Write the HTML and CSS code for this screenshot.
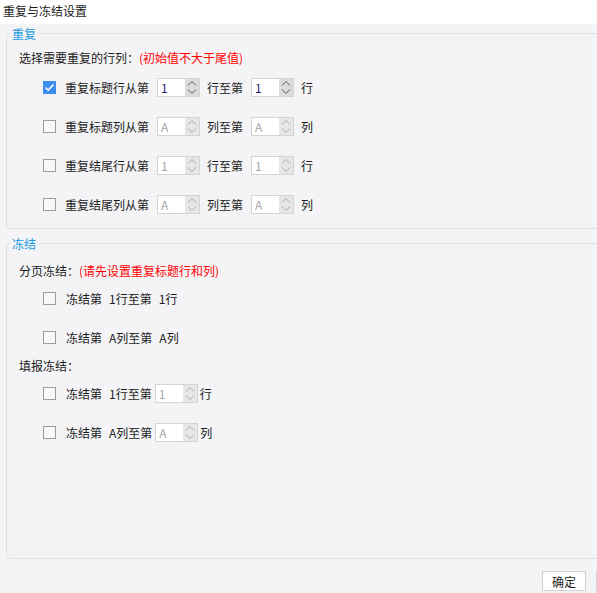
FILE: index.html
```html
<!DOCTYPE html>
<html lang="zh">
<head>
<meta charset="utf-8">
<title>重复与冻结设置</title>
<link rel="stylesheet" href="styles.css">
</head>
<body>
<div class="dialog">
  <div class="titlebar">重复与冻结设置</div>

  <fieldset class="group group-repeat">
    <legend>重复</legend>
    <div class="hint">选择需要重复的行列：<span class="warn">(初始值不大于尾值)</span></div>

    <div class="row">
      <span class="check on"><svg viewBox="0 0 13 13" width="13" height="13"><polyline points="2.5,6.5 5.2,9.2 10.5,3.5" fill="none" stroke="#fff" stroke-width="1.6"/></svg></span>
      <span class="label">重复标题行从第</span>
      <span class="spin"><span class="val">1</span><span class="arrows"><svg viewBox="0 0 14 17" width="14" height="17"><polyline points="3,6.5 7,2.5 11,6.5" fill="none" stroke="currentColor"/><polyline points="3,10.5 7,14.5 11,10.5" fill="none" stroke="currentColor"/></svg></span></span>
      <span class="label">行至第</span>
      <span class="spin"><span class="val">1</span><span class="arrows"><svg viewBox="0 0 14 17" width="14" height="17"><polyline points="3,6.5 7,2.5 11,6.5" fill="none" stroke="currentColor"/><polyline points="3,10.5 7,14.5 11,10.5" fill="none" stroke="currentColor"/></svg></span></span>
      <span class="label">行</span>
    </div>

    <div class="row">
      <span class="check"></span>
      <span class="label">重复标题列从第</span>
      <span class="spin off"><span class="val">A</span><span class="arrows"><svg viewBox="0 0 14 17" width="14" height="17"><polyline points="3,6.5 7,2.5 11,6.5" fill="none" stroke="currentColor"/><polyline points="3,10.5 7,14.5 11,10.5" fill="none" stroke="currentColor"/></svg></span></span>
      <span class="label">列至第</span>
      <span class="spin off"><span class="val">A</span><span class="arrows"><svg viewBox="0 0 14 17" width="14" height="17"><polyline points="3,6.5 7,2.5 11,6.5" fill="none" stroke="currentColor"/><polyline points="3,10.5 7,14.5 11,10.5" fill="none" stroke="currentColor"/></svg></span></span>
      <span class="label">列</span>
    </div>

    <div class="row">
      <span class="check"></span>
      <span class="label">重复结尾行从第</span>
      <span class="spin off"><span class="val">1</span><span class="arrows"><svg viewBox="0 0 14 17" width="14" height="17"><polyline points="3,6.5 7,2.5 11,6.5" fill="none" stroke="currentColor"/><polyline points="3,10.5 7,14.5 11,10.5" fill="none" stroke="currentColor"/></svg></span></span>
      <span class="label">行至第</span>
      <span class="spin off"><span class="val">1</span><span class="arrows"><svg viewBox="0 0 14 17" width="14" height="17"><polyline points="3,6.5 7,2.5 11,6.5" fill="none" stroke="currentColor"/><polyline points="3,10.5 7,14.5 11,10.5" fill="none" stroke="currentColor"/></svg></span></span>
      <span class="label">行</span>
    </div>

    <div class="row">
      <span class="check"></span>
      <span class="label">重复结尾列从第</span>
      <span class="spin off"><span class="val">A</span><span class="arrows"><svg viewBox="0 0 14 17" width="14" height="17"><polyline points="3,6.5 7,2.5 11,6.5" fill="none" stroke="currentColor"/><polyline points="3,10.5 7,14.5 11,10.5" fill="none" stroke="currentColor"/></svg></span></span>
      <span class="label">列至第</span>
      <span class="spin off"><span class="val">A</span><span class="arrows"><svg viewBox="0 0 14 17" width="14" height="17"><polyline points="3,6.5 7,2.5 11,6.5" fill="none" stroke="currentColor"/><polyline points="3,10.5 7,14.5 11,10.5" fill="none" stroke="currentColor"/></svg></span></span>
      <span class="label">列</span>
    </div>
  </fieldset>

  <fieldset class="group group-freeze">
    <legend>冻结</legend>
    <div class="hint">分页冻结：<span class="warn">(请先设置重复标题行和列)</span></div>

    <div class="row frow">
      <span class="check"></span>
      <span class="text">冻结第<span class="num">1</span>行至第<span class="num">1</span>行</span>
    </div>
    <div class="row frow">
      <span class="check"></span>
      <span class="text">冻结第<span class="num">A</span>列至第<span class="num">A</span>列</span>
    </div>

    <div class="hint">填报冻结：</div>

    <div class="row frow">
      <span class="check"></span>
      <span class="text">冻结第<span class="num">1</span>行至第</span>
      <span class="spin off tight"><span class="val">1</span><span class="arrows"><svg viewBox="0 0 14 17" width="14" height="17"><polyline points="3,6.5 7,2.5 11,6.5" fill="none" stroke="currentColor"/><polyline points="3,10.5 7,14.5 11,10.5" fill="none" stroke="currentColor"/></svg></span></span>
      <span class="text">行</span>
    </div>
    <div class="row frow">
      <span class="check"></span>
      <span class="text">冻结第<span class="num">A</span>列至第</span>
      <span class="spin off tight"><span class="val">A</span><span class="arrows"><svg viewBox="0 0 14 17" width="14" height="17"><polyline points="3,6.5 7,2.5 11,6.5" fill="none" stroke="currentColor"/><polyline points="3,10.5 7,14.5 11,10.5" fill="none" stroke="currentColor"/></svg></span></span>
      <span class="text">列</span>
    </div>
  </fieldset>

  <div class="footer">
    <button class="btn">确定</button>
    <button class="btn" aria-label="取消"></button>
  </div>
</div>
</body>
</html>
```

FILE: styles.css
```css
* { box-sizing: border-box; }

html, body {
  margin: 0;
  padding: 0;
}

body {
  width: 597px;
  height: 593px;
  overflow: hidden;
  background: #f4f4f6;
  font-family: "Noto Sans CJK SC", "Microsoft YaHei", sans-serif;
  font-size: 12px;
  color: #1b1b1b;
}

.dialog {
  width: 648px;
  height: 593px;
  display: flex;
  flex-direction: column;
}

.titlebar {
  flex: none;
  height: 24px;
  background: #ffffff;
  padding-left: 3px;
  line-height: 21px;
}

.group {
  min-width: 0;
  margin: 1px 6px 0 6px;
  padding: 0 0 4px 3px;
  border: 1px solid #e1e1e5;
  border-radius: 4px;
}

.group legend {
  padding: 0 2px;
  line-height: 17px;
  font-size: 12px;
  color: #1a9ae0;
}

.group-repeat {
  flex: none;
}

.group-freeze {
  flex: 1;
  margin-top: 6px;
}

.hint {
  padding-left: 9px;
  line-height: 17px;
}

.group-repeat .hint {
  margin: 7px 0 2px;
}

.group-freeze .hint:first-of-type {
  margin-top: 10px;
}

.warn {
  color: #ff0000;
}

.row {
  display: flex;
  align-items: center;
  height: 39px;
  padding-left: 33px;
}

.check {
  flex: none;
  width: 13px;
  height: 13px;
  border: 1px solid #9c9c9c;
  background: #f8f8fa;
  margin-right: 9px;
  display: flex;
}

.check svg {
  margin: -1px;
}

.check.on {
  background: #3c8dec;
  border-color: #3c8dec;
}

.frow .check {
  margin-right: 10px;
}

.label, .text {
  white-space: nowrap;
  line-height: 17px;
}

.num {
  margin-left: 7px;
}

.spin {
  flex: none;
  display: flex;
  width: 43px;
  height: 19px;
  margin: 0 7px 0 8px;
  border: 1px solid #d4d4d6;
  background: #ffffff;
}

.spin.tight {
  margin: 0 2px 0 3px;
}

.spin .val {
  flex: 1;
  padding-left: 3px;
  line-height: 17px;
  color: #1d1d6e;
}

.spin .arrows {
  flex: none;
  width: 14px;
  display: flex;
  align-items: center;
  justify-content: center;
  background: #dcdcde;
  color: #5a5a5a;
}

.spin.off .val {
  color: #a6a6a8;
}

.spin.off .arrows {
  background: #e6e6e8;
  color: #a9a9ab;
}

.footer {
  flex: none;
  height: 34px;
  display: flex;
  justify-content: flex-end;
  gap: 10px;
  padding: 12px 8px 0 0;
}

.btn {
  width: 44px;
  height: 20px;
  padding: 0;
  border: 1px solid #d2d2d4;
  background: #ffffff;
  font-family: inherit;
  font-size: 12px;
  line-height: 17px;
  color: #1b1b1b;
}
```
